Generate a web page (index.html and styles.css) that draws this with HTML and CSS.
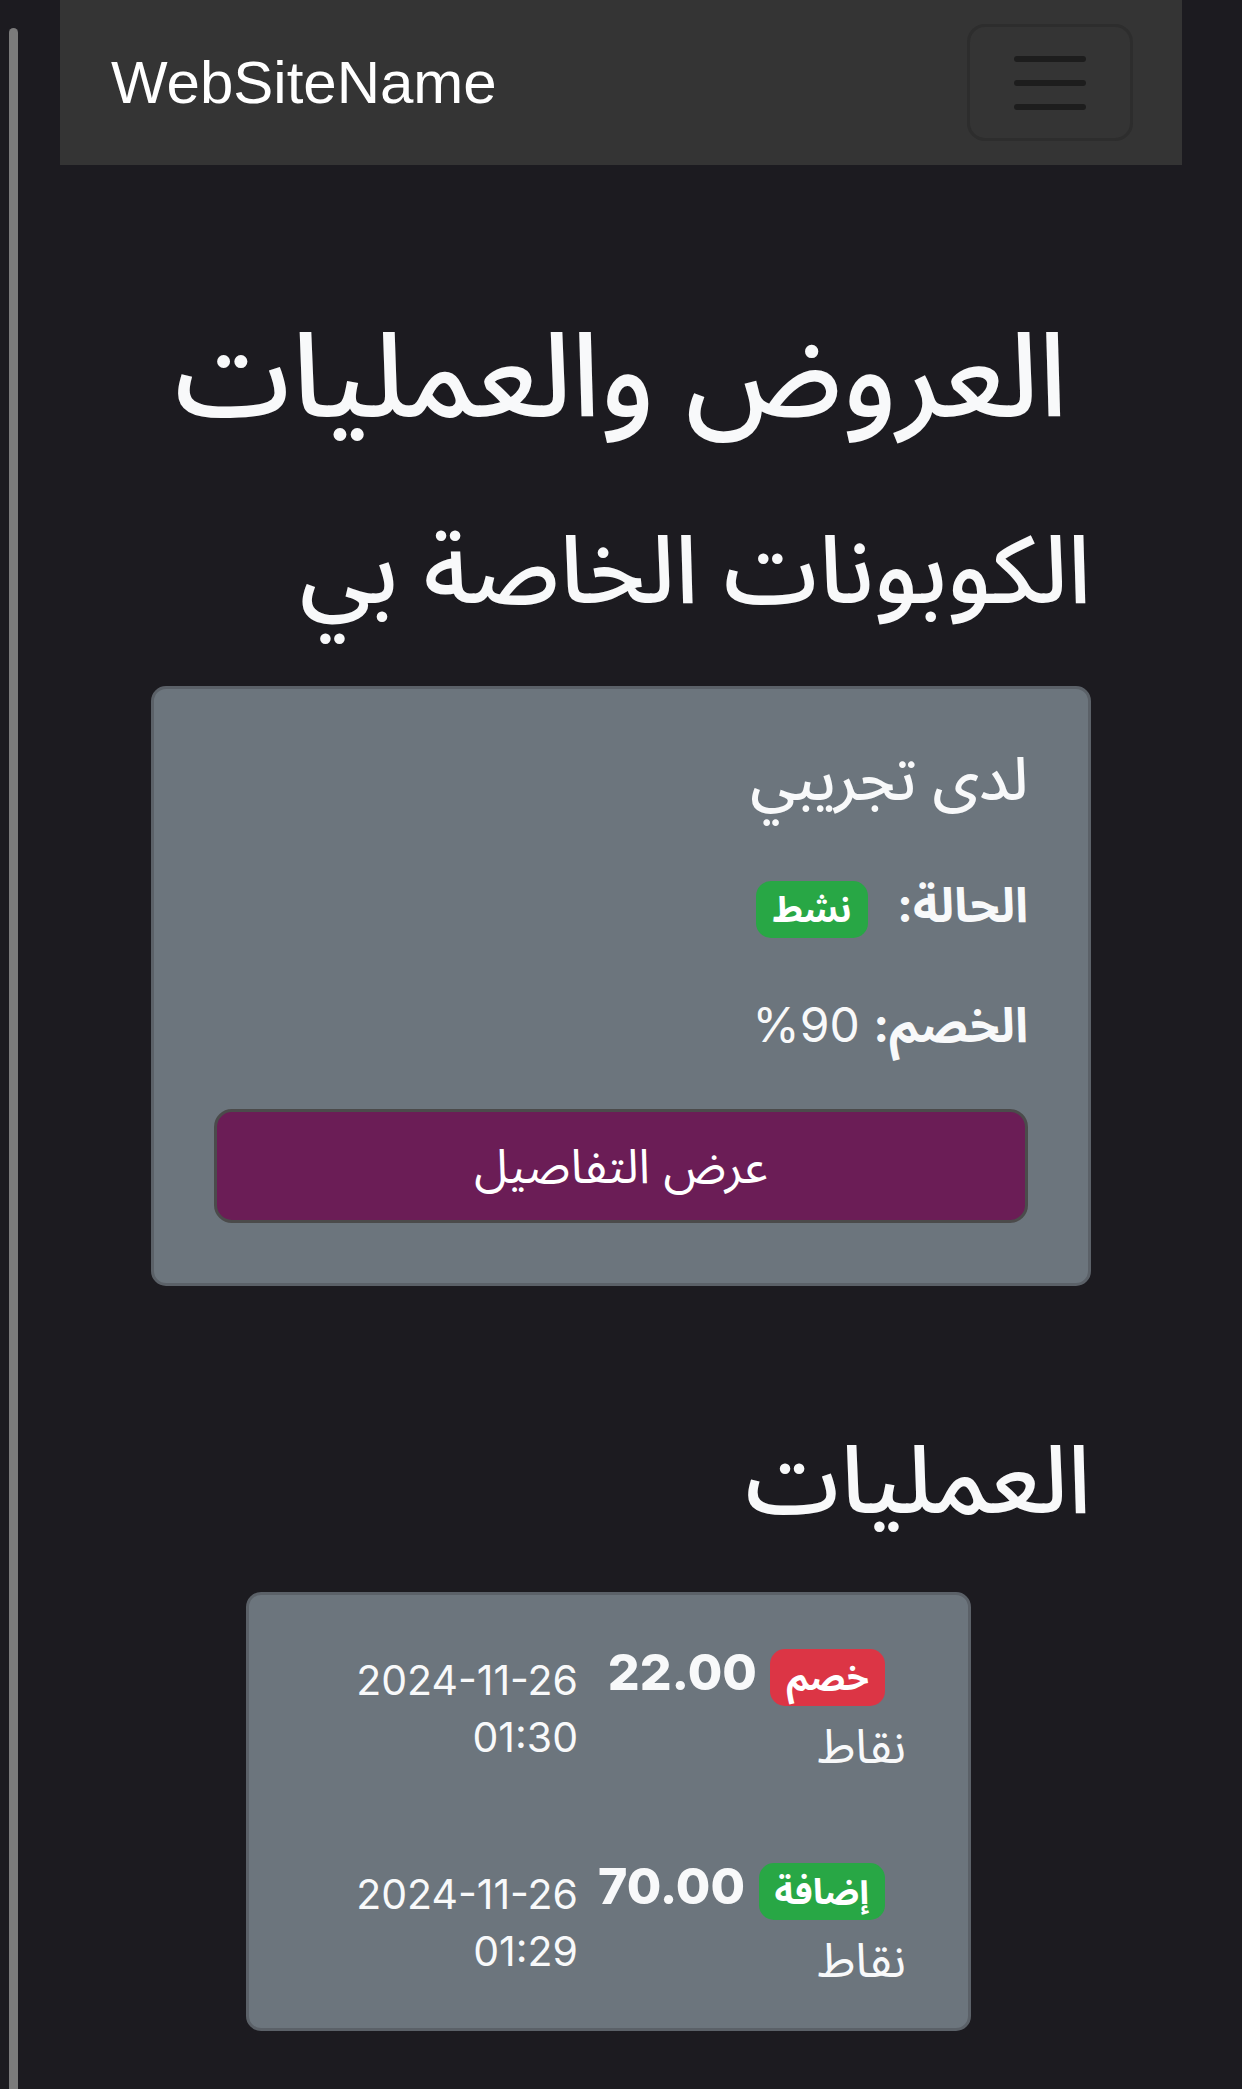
FILE: index.html
```html
<!DOCTYPE html>
<html lang="ar" dir="rtl">
<head>
<meta charset="utf-8">
<title>العروض والعمليات</title>
<link rel="stylesheet" href="styles.css">
</head>
<body>
<div class="scroll-indicator"></div>
<nav class="navbar" dir="ltr">
  <a class="brand" href="#">WebSiteName</a>
  <button class="toggler" type="button" aria-label="القائمة"><span></span><span></span><span></span></button>
</nav>
<main class="content">
  <h1 class="page-title">العروض والعمليات</h1>
  <h2 class="section-title">الكوبونات الخاصة بي</h2>
  <div class="card coupon">
    <h5 class="card-title">لدى تجريبي</h5>
    <p class="line"><strong>الحالة:</strong> <span class="badge badge-success">نشط</span></p>
    <p class="line"><strong>الخصم:</strong> 90%</p>
    <button class="btn-details" type="button">عرض التفاصيل</button>
  </div>
  <h2 class="section-title ops">العمليات</h2>
  <div class="card tx-card">
    <div class="tx-row">
      <div class="tx-main"><span class="badge badge-danger">خصم</span> <strong class="amount">22.00</strong> نقاط</div>
      <div class="tx-date">2024-11-26 01:30</div>
    </div>
    <div class="tx-row">
      <div class="tx-main"><span class="badge badge-success">إضافة</span> <strong class="amount">70.00</strong> نقاط</div>
      <div class="tx-date">2024-11-26 01:29</div>
    </div>
  </div>
</main>
</body>
</html>
```
FILE: styles.css
```css
* { box-sizing: border-box; }
html, body { margin: 0; padding: 0; }
body {
  background: #1c1b20;
  color: #f8f9fa;
  font-family: Inter, "Noto Sans Arabic", "DejaVu Sans", sans-serif;
  font-size: 48px;
  line-height: 1.5;
  min-height: 2089px;
}
.scroll-indicator {
  position: fixed;
  left: 9px;
  top: 28px;
  bottom: -20px;
  width: 9px;
  background: #7b7b7b;
  border-radius: 5px 5px 0 0;
}
.navbar {
  margin: 0 60px;
  height: 165px;
  background: #343434;
  display: flex;
  align-items: center;
  justify-content: space-between;
  padding: 0 49px 0 51px;
}
.brand {
  font-family: "Liberation Sans", Arial, sans-serif;
  font-size: 60px;
  line-height: 1;
  color: #fff;
  text-decoration: none;
}
.toggler {
  width: 166px;
  height: 117px;
  border: 3px solid #2d2d2d;
  border-radius: 18px;
  background: transparent;
  display: flex;
  flex-direction: column;
  align-items: center;
  justify-content: center;
  gap: 18px;
  padding: 0;
}
.toggler span {
  display: block;
  width: 72px;
  height: 6px;
  border-radius: 3px;
  background: #1d1d1d;
}
.content { padding: 139px 151px 0; }
.page-title {
  font-size: 117px;
  line-height: 1.2;
  font-weight: 500;
  text-align: center;
  margin: 0 0 68px;
}
.section-title {
  font-size: 95px;
  line-height: 1.2;
  font-weight: 500;
  margin: 0 0 60px;
}
.card {
  background: #6c757d;
  border: 3px solid #5b6168;
  border-radius: 15px;
}
.coupon { padding: 53px 60px 60px; }
.card-title {
  font-size: 60px;
  line-height: 1.2;
  font-weight: 500;
  margin: 0 0 55px;
}
.line { margin: 0 0 48px; }
.line strong { font-weight: 700; }
.line .badge { margin-right: 16px; }
.badge {
  display: inline-block;
  font-size: 36px;
  font-weight: 700;
  line-height: 1;
  padding: 10px 16px 11px;
  border-radius: 15px;
  color: #fff;
  vertical-align: middle;
}
.badge-success { background: #28a745; }
.badge-danger { background: #dc3545; }
.btn-details {
  display: block;
  width: 100%;
  height: 114px;
  background: #6b1d56;
  border: 3px solid #4b4b4b;
  border-radius: 18px;
  color: #fff;
  font-family: inherit;
  font-size: 48px;
  line-height: 72px;
  padding: 18px 36px;
}
.ops { margin-top: 136px; margin-bottom: 56px; }
.tx-card {
  width: 725px;
  margin-right: 120px;
  padding: 40px 62px 32px 50px;
}
.tx-row {
  display: grid;
  grid-template-columns: 312px 1fr;
  column-gap: 16px;
  align-items: center;
}
.tx-row + .tx-row { margin-top: 67px; }
.tx-main .badge { margin-right: 21px; }
.amount { font-size: 50px; font-weight: 800; }
.tx-date { font-size: 41px; line-height: 57px; }
```
